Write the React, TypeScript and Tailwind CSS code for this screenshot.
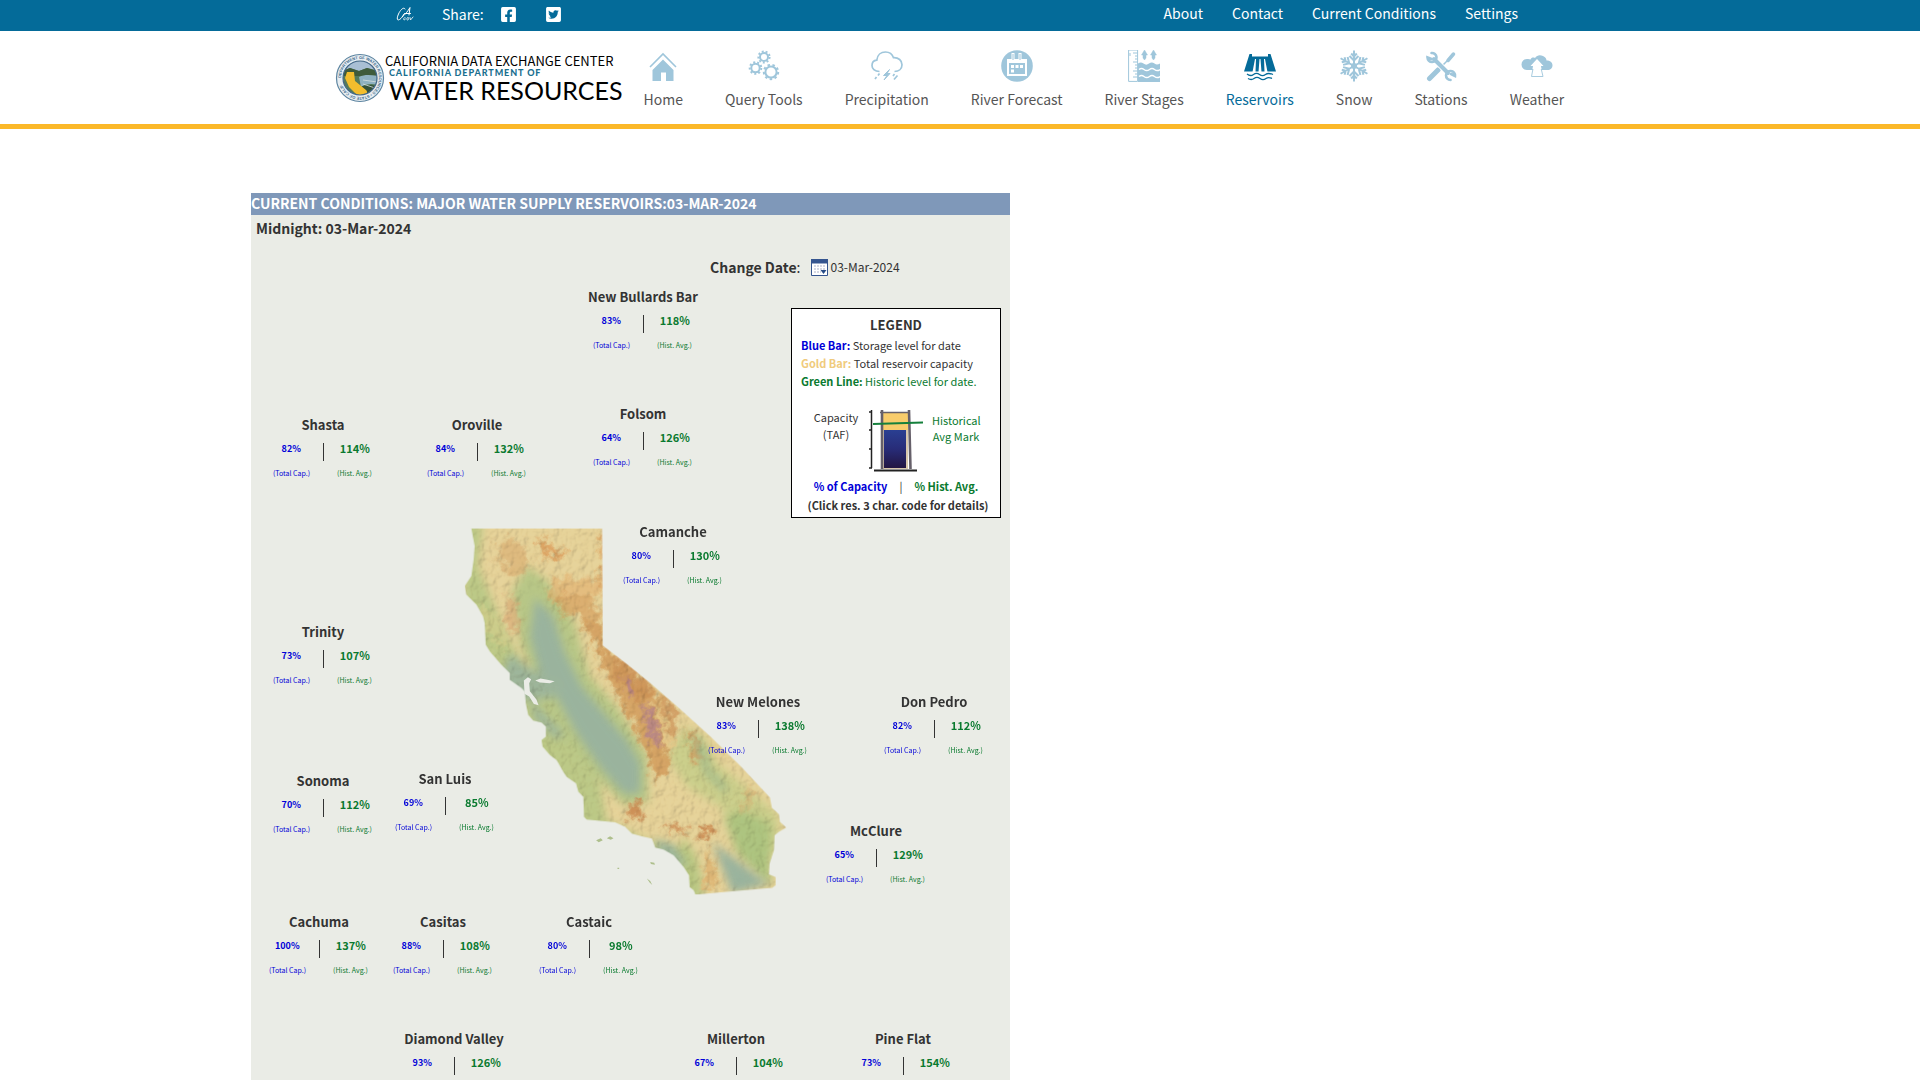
import type { ReactNode } from 'react'
import { FaFacebookSquare, FaTwitterSquare } from 'react-icons/fa'

const topLinks = ['About', 'Contact', 'Current Conditions', 'Settings']

const navItems: { name: string; icon: ReactNode; active?: boolean }[] = [
    { name: 'Home', icon: <HomeIcon /> },
    { name: 'Query Tools', icon: <GearsIcon /> },
    { name: 'Precipitation', icon: <StormIcon /> },
    { name: 'River Forecast', icon: <ForecastIcon /> },
    { name: 'River Stages', icon: <StagesIcon /> },
    { name: 'Reservoirs', icon: <DamIcon />, active: true },
    { name: 'Snow', icon: <SnowIcon /> },
    { name: 'Stations', icon: <ToolsIcon /> },
    { name: 'Weather', icon: <WeatherIcon /> },
]

// x is the middle of the label, y is its top edge, both on the map canvas
const reservoirs = [
    { name: 'New Bullards Bar', x: 392, y: 73, cap: 83, avg: 118 },
    { name: 'Shasta', x: 72, y: 201, cap: 82, avg: 114 },
    { name: 'Oroville', x: 226, y: 201, cap: 84, avg: 132 },
    { name: 'Folsom', x: 392, y: 190, cap: 64, avg: 126 },
    { name: 'Camanche', x: 422, y: 308, cap: 80, avg: 130 },
    { name: 'Trinity', x: 72, y: 408, cap: 73, avg: 107 },
    { name: 'New Melones', x: 507, y: 478, cap: 83, avg: 138 },
    { name: 'Don Pedro', x: 683, y: 478, cap: 82, avg: 112 },
    { name: 'Sonoma', x: 72, y: 557, cap: 70, avg: 112 },
    { name: 'San Luis', x: 194, y: 555, cap: 69, avg: 85 },
    { name: 'McClure', x: 625, y: 607, cap: 65, avg: 129 },
    { name: 'Cachuma', x: 68, y: 698, cap: 100, avg: 137 },
    { name: 'Casitas', x: 192, y: 698, cap: 88, avg: 108 },
    { name: 'Castaic', x: 338, y: 698, cap: 80, avg: 98 },
    { name: 'Diamond Valley', x: 203, y: 815, cap: 93, avg: 126 },
    { name: 'Millerton', x: 485, y: 815, cap: 67, avg: 104 },
    { name: 'Pine Flat', x: 652, y: 815, cap: 73, avg: 154 },
]

function HomeIcon() {
    return (
        <svg viewBox="0 0 32 32" className="h-8 w-8" fill="currentColor" aria-hidden="true">
            <path d="M3 17 16 4l13 13" fill="none" stroke="currentColor" strokeWidth="1.6" />
            <path d="M5.500 20 16 9.500 26.500 20V31H19v-8.500h-5V31H5.500z" />
        </svg>
    )
}

function Gear({ cx, cy, r }: { cx: number; cy: number; r: number }) {
    const step = (2 * Math.PI * (r + 1.6)) / 18
    return (
        <g fill="none" stroke="currentColor">
            <circle cx={cx} cy={cy} r={r} strokeWidth="2" />
            <circle cx={cx} cy={cy} r={r + 1.6} strokeWidth="2" strokeDasharray={`${step} ${step}`} />
        </g>
    )
}

function GearsIcon() {
    return (
        <svg viewBox="0 0 32 32" className="h-8 w-8" aria-hidden="true">
            <Gear cx={16} cy={7} r={4} />
            <Gear cx={7.5} cy={18} r={4.2} />
            <Gear cx={23} cy={22} r={5.6} />
        </svg>
    )
}

function StormIcon() {
    return (
        <svg viewBox="0 0 32 32" className="h-8 w-8" fill="none" stroke="currentColor" strokeWidth="1.7" aria-hidden="true">
            <path d="M8.500 21.500C3.500 21.500 1 18.500 1 15.500c0-3 2-5 4.800-5.300C6.300 5 10 2 14.500 2c4 0 6.800 2.200 8 5.700 5-.3 8.500 2.800 8.500 7s-3.300 6.800-7.500 6.800" />
            <path d="M18.500 19.500l-6 6h3.500l-3 4.500 6-6.500H16z" fill="currentColor" strokeWidth="1" />
            <path d="M8.500 23.500 7 25.500M5.500 27 4 29M23.500 24 22 26M26.500 25.500 23 29.500" />
        </svg>
    )
}

function ForecastIcon() {
    return (
        <svg viewBox="0 0 32 32" className="h-8 w-8" aria-hidden="true">
            <circle cx="16" cy="16" r="15.8" fill="currentColor" />
            <path d="M7 10h18v15H7z" fill="none" stroke="white" strokeWidth="2" />
            <path d="M7 9h18v4H7zM10.500 3h3v8h-3zM17.500 3h3v8h-3z" fill="white" />
            <path d="M12 4v6M19 4v6" stroke="currentColor" />
            <path d="M10 15h3v3h-3zM14.500 15h3v3h-3zM19 15h3v3h-3zM10 19.500h3v3h-3z" fill="white" />
        </svg>
    )
}

function StagesIcon() {
    return (
        <svg viewBox="0 0 32 32" className="h-8 w-8" fill="none" stroke="currentColor" aria-hidden="true">
            <path d="M.6 0h9v31.400h-9zM5 3h4.500M7 6h2.500M7 9h2.500M5 12h4.500M7 15h2.500M7 18h2.500M5 21h4.500M7 24h2.500M5 27h4.500" />
            <path d="M2 3v3" />
            <path d="M16.500 0l3 5h-1.500v3l-1.500 2-1.500-2V5h-1.500zM25.500 0l3 5h-1.500v3l-1.500 2-1.500-2V5h-1.500z" fill="currentColor" strokeWidth=".5" />
            <path d="M10 13.500c2-1.500 3.500-1.500 5.500 0s3.500 1.500 5.500 0 3.500-1.500 5.500 0 3.500 1 5.500 0V32H10z" fill="currentColor" stroke="none" />
            <path d="M11 19.500c2-1.500 3-1.500 5 0s3.500 1.500 5.500 0 3-1.500 5 0 3.500 1.500 5.500 0M11 26.500c2-1.500 3-1.500 5 0s3.500 1.500 5.500 0 3-1.500 5 0 3.500 1.500 5.500 0" stroke="white" strokeWidth="1.5" />
        </svg>
    )
}

function DamIcon() {
    return (
        <svg viewBox="0 0 32 32" className="h-8 w-8" fill="none" stroke="currentColor" strokeWidth="1.3" aria-hidden="true">
            <path d="M5.500 4H8v2.500h16V4h2.500L32 21.500H0z" fill="currentColor" stroke="none" />
            <path d="M11 9h1l-.5 13H8.500zM15.500 9h1l1 13h-3zM20 9h1l2.500 13h-3z" fill="white" stroke="none" />
            <path d="M3 24c2.500 2 4.500 2 6.500.500s4-1.500 6 0 4 1.500 6 0 4-1.500 7.500 0M4 28.500c2.500 1.500 4 1.500 6 0s4-1.500 6 0 4 1.500 6 0 4-1 6 0" />
        </svg>
    )
}

function SnowIcon() {
    return (
        <svg viewBox="0 0 32 32" className="h-8 w-8" fill="none" stroke="currentColor" strokeWidth="2" aria-hidden="true">
            {[0, 60, 120, 180, 240, 300].map((angle) => (
                <path
                    key={angle}
                    transform={`rotate(${angle} 16 16)`}
                    d="M16 16V.5M16 6.500l-2.800-3M16 6.500l2.800-3M16 10.500 11.500 6M16 10.500 20.500 6"
                />
            ))}
            <circle cx="16" cy="16" r="3" fill="currentColor" stroke="none" />
        </svg>
    )
}

function ToolsIcon() {
    return (
        <svg viewBox="0 0 32 32" className="h-8 w-8" fill="none" stroke="currentColor" strokeLinecap="round" aria-hidden="true">
            <path d="M4.500 28.500 13 20" strokeWidth="5" />
            <path d="M15 18l9-9" strokeWidth="1.5" />
            <path d="M23 10.500 28.500 4" strokeWidth="3.5" />
            <path d="M9 9l14 14" stroke="white" strokeWidth="6" />
            <path d="M9 9l14 14" strokeWidth="4" />
            <path d="M6.500 3a4.500 4.500 0 1 1-4 4.500l4 1.500" strokeWidth="2.6" />
            <path d="M25.500 30a4.500 4.500 0 1 1 4.500-4l-4-2" strokeWidth="2.6" />
        </svg>
    )
}

function WeatherIcon() {
    return (
        <svg viewBox="0 0 32 32" className="h-8 w-8" fill="currentColor" aria-hidden="true">
            <path d="M6 20a5.500 5.500 0 0 1 0-11c1.500-.3 2.500 0 3.500.5C10.500 7.500 12 7 14 8c2-3 5-3.500 8-2 2.500 1 3.500 3 3.500 4.500 3.500 0 6 2 6 4.700S29.500 20 26.500 20z" />
            <path d="M16 9.500 22 16h-2.500L22 26.500H10.500L12.500 16H10z" fill="white" stroke="currentColor" strokeWidth=".9" />
            <path d="M16 9 22.500 16H20l.5 3h-9l.5-3H9.500z" fill="white" />
        </svg>
    )
}

function Seal() {
    return (
        <svg viewBox="0 0 50 50" className="h-[50px] w-[50px] shrink-0" aria-hidden="true">
            <defs>
                <clipPath id="sealInner">
                    <circle cx="25" cy="25" r="17" />
                </clipPath>
                <path id="sealRing" d="M25 25m-19 0a19 19 0 1 1 38 0a19 19 0 1 1-38 0" />
            </defs>
            <circle cx="25" cy="25" r="23.5" fill="#e8eef2" stroke="#5c84a0" strokeWidth="1.2" />
            <text fontSize="4" fill="#3d6c8d" fontWeight="700" fontFamily="Liberation Sans, sans-serif">
                <textPath href="#sealRing">DEPARTMENT OF WATER RESOURCES • STATE OF CALIF</textPath>
            </text>
            <g clipPath="url(#sealInner)">
                <path d="M5 5h40v40H5z" fill="#547a5a" />
                <path d="M5 5h40v13L32 15l-8 3-9-3-10 4z" fill="#a9bfd4" />
                <path d="M5 19l10-4 9 3 8-3 13 4v4H5z" fill="#3f5b3b" />
                <path d="M24 24c6-3 12-2 20-1v9c-8-2-14-1-18 2z" fill="#8fb1c1" />
                <path d="M26 34c6-3 11-2 18 0v12H25z" fill="#35523b" />
                <path d="M28 27l14 2M28 31l12 4" stroke="#d5dfe0" strokeWidth=".8" />
                <path d="M12 19l7 0 1 9 11 9c2 2 1 4-1 5l-8 0-8-8-4-9z" fill="#f2bd2d" />
            </g>
            <circle cx="25" cy="25" r="17" fill="none" stroke="#44688a" strokeWidth="1.2" />
        </svg>
    )
}

function CaGovMark() {
    return (
        <svg viewBox="0 0 20 16" className="h-4 w-5" fill="none" stroke="white" strokeWidth="1" strokeLinecap="round" aria-hidden="true">
            <path d="M9 3C8 .5 4.500 3.500 2.500 8s-1.500 7 1 5.500 3-3 4-5M6 11c3-2 6-6 8-9.500L13 9M8.500 7.500h6" />
            <path d="M9 11.500c-1.500 0-2 2.500-.5 2.500l1-1.200M12 11.500c-1.200 0-1.800 2.300-.5 2.500s1.800-2.300.5-2.500M14 11.500l.5 2.500 2.500-3" strokeWidth=".8" />
        </svg>
    )
}

function CalendarIcon() {
    return (
        <svg viewBox="0 0 17 17" className="h-[17px] w-[17px]" aria-hidden="true">
            <path d="M.5.5h16v16H.5z" fill="white" stroke="#35558f" />
            <path d="M0 0h17v4.500H0z" fill="#35558f" />
            <path d="M3 7h11M3 10h11M3 13h7" stroke="#d5d8e4" strokeDasharray="2 1" strokeWidth="2" />
            <path d="M9.500 11h6l-3 4z" fill="#264b86" />
        </svg>
    )
}

function BarDiagram() {
    return (
        <svg viewBox="0 0 56 64" className="h-16 w-14" aria-hidden="true">
            <defs>
                <linearGradient id="storage" x1="0" y1="0" x2="0" y2="1">
                    <stop offset="0" stopColor="#2a3f92" />
                    <stop offset=".5" stopColor="#282c78" />
                    <stop offset="1" stopColor="#221542" />
                </linearGradient>
            </defs>
            <path d="M3.500 1v58M1 3h3M1 21h3M1 40h3M1 59h3" stroke="#222" strokeWidth="1.5" fill="none" />
            <path d="M15 4h25v17H15z" fill="#f8cc6b" />
            <path d="M15 21h25v39H15z" fill="#d8c7ac" />
            <path d="M16 21h22v38H16z" fill="url(#storage)" />
            <path d="M14 1v59M41 1l1.500 59" stroke="#66606a" strokeWidth="2.6" />
            <path d="M12 3.500h30" stroke="#66606a" strokeWidth="1.5" />
            <path d="M6 61.500h43" stroke="#222" strokeWidth="1.8" />
            <path d="M5 15l50-1.500" stroke="#15803c" strokeWidth="1.8" />
        </svg>
    )
}

const outline =
    'M65 57H456L458 408 530 463 600 520 690 598 780 680 870 768 958 862 964 893 985 912 988 935 1007 952 985 965 972 975 970 1020 957 1060 955 1092 975 1100 975 1125 965 1132 735 1152 730 1140 718 1130 716 1095 700 1070 670 1035 640 1018 615 1012 605 985 575 978 545 970 525 950 495 936 450 932 410 928 402 920 400 860 385 845 378 820 350 800 340 785 320 750 300 735 278 710 275 690 288 680 288 650 275 638 250 632 235 615 228 580 225 545 215 535 180 510 180 490 155 465 120 425 108 405 105 340 100 320 80 285 50 255 45 230 65 200 72 150 75 110Z'

function CaliforniaMap() {
    return (
        <svg viewBox="40 50 972 1108" className="h-auto w-[325px]" role="img" aria-label="California relief map">
            <defs>
                <clipPath id="state">
                    <path d={outline} />
                </clipPath>
                <filter id="soft" x="-20%" y="-20%" width="140%" height="140%">
                    <feGaussianBlur stdDeviation="12" />
                </filter>
                <filter id="rough" x="-20%" y="-20%" width="140%" height="140%">
                    <feGaussianBlur stdDeviation="6" result="b" />
                    <feTurbulence type="fractalNoise" baseFrequency=".035" numOctaves="3" seed="4" />
                    <feDisplacementMap in="b" scale="65" xChannelSelector="R" yChannelSelector="G" />
                </filter>
                <filter id="relief" x="0" y="0" width="100%" height="100%">
                    <feTurbulence type="fractalNoise" baseFrequency=".04" numOctaves="4" seed="9" />
                    <feDiffuseLighting lightingColor="#fffaf0" surfaceScale="9" diffuseConstant="1.18">
                        <feDistantLight azimuth="215" elevation="60" />
                    </feDiffuseLighting>
                </filter>
                <mask id="hills">
                    <path d="M40 50h980v1110H40z" fill="white" />
                    <path d="M240 230L330 400 400 560 500 680 560 760 560 860 480 790 370 640 300 510 250 400Z" fill="black" stroke="black" strokeWidth="40" filter="url(#soft)" />
                    <path d="M800 1010l130 110h-90z" fill="black" stroke="black" strokeWidth="16" filter="url(#soft)" />
                </mask>
            </defs>
            <g clipPath="url(#state)">
                <path d="M40 50h980v1110H40z" fill="#e6d39b" />
                <g filter="url(#soft)">
                    <path d="M40 40h60l-15 130 75 180 60 120 70 70 60 130 100 150 20 110 120 60 110 30 60 120v80H660L200 760 40 400z" fill="#bcc988" />
                    <path d="M230 170L185 250 210 400 250 500 320 640 440 800 520 885 595 875 590 730 500 590 420 500 370 330 290 210z" fill="#b8c788" />
                    <path d="M700 650l60 30 40 80 50 40 130 110 10 120-110-20-70-120-100-60-60-90z" fill="#cbcf8d" />
                    <path d="M820 920l60-20 80 40v190l-100-100z" fill="#adc481" />
                    <path d="M700 980l40 60 20 90h-60l-30-80z" fill="#b9c884" />
                </g>
                <g filter="url(#rough)">
                    <path d="M150 90l70 10 20 60-30 40-30 0-40-60z" fill="#d9ab70" opacity=".6" />
                    <path d="M165 260l40 10 0 110-30-20z" fill="#d9a06d" opacity=".5" />
                    <path d="M90 290l50 20 40 100-30 10-50-70z" fill="#d6cf8e" opacity=".6" />
                    <path d="M265 80l30 10-6 22 60 8-8 22-60-8-16 25z" fill="#dc9c5b" opacity=".85" />
                    <path d="M450 70h20v190l-20-30 2-80z" fill="#dca867" />
                    <path d="M300 200l150 20 10 40-70 0-90 20z" fill="#e2ab69" opacity=".55" />
                    <path d="M320 260l90 0 60 60-40 10-100-20z" fill="#d49757" opacity=".6" />
                    <path d="M395 330L440 430 480 520 540 620 590 740 610 810 655 780 665 700 635 570 560 500 470 420 450 330z" fill="#d19859" opacity=".8" />
                    <path d="M710 660l25 10 20 80-22 10z" fill="#d49b5f" opacity=".8" />
                    <path d="M490 430l60 40 60 60-40 50-60-50z" fill="#cb9055" opacity=".7" />
                    <path d="M630 550l40 30 10 90-20 0z" fill="#cd955a" opacity=".8" />
                    <path d="M520 500l30 15 5 45-20 0zM575 590l25 0 35 110-15 20-30-60z" fill="#b5848c" opacity=".85" />
                    <path d="M535 875l40 10 5 40-45-5zM650 945l50 0 10 22-60-5zM745 950l45 0 5 30-45-10z" fill="#c9854c" opacity=".85" />
                    <path d="M775 1000l20 40 10 90h-50z" fill="#deb878" />
                    <path d="M890 840l25 10-40 60z" fill="#d8a46b" opacity=".5" />
                    <path d="M610 570l20 20 35 120-15 10z" fill="#e7cd8f" />
                </g>
                <g filter="url(#soft)">
                    <path d="M255 265L310 320 345 430 395 530 470 620 530 690 570 760 570 850 520 850 450 770 380 670 320 560 270 490 240 380Z" fill="#9ab39d" />
                    <path d="M180 430l50 40 50 30 60 20-20 40-70 10-40 0-60-60z" fill="#9db59b" />
                    <path d="M720 660l40 50 20 70 50 50-5 20-60-60z" fill="#9db78b" />
                    <path d="M240 560l40 50 60 60-15 20-70-60z" fill="#9db59b" />
                    <path d="M610 985l60 20 40 60-30 0-50-40z" fill="#9ab39d" />
                    <path d="M785 995l170 125-110 30z" fill="#9ab39d" />
                </g>
                <path d="M40 50h980v1110H40z" filter="url(#relief)" mask="url(#hills)" opacity=".4" className="mix-blend-multiply" />
            </g>
            <path d="M222 512l12-10 10 6-6 12 2 24 20 26 6 16-14-4-14-22-14-8zM256 512l16-6 20 4 22 4-14 6-30-2z" fill="#eaece6" />
            <path d="M438 990l14-6 6 6-12 6zM470 984l10-6 10 6-8 4zM600 1055l12 2 2 6-12-2zM502 1072h5v4h-5zM590 1104l10 8 6 12-8-8z" fill="#aebf8c" />
        </svg>
    )
}

function Legend() {
    return (
        <section className="h-[210px] w-[210px] border border-black bg-white pt-[6px] text-[11px] leading-[18px] text-[#333]">
            <h2 className="pb-px text-center text-[13px] leading-5 font-bold">LEGEND</h2>
            <div className="px-[9px] whitespace-nowrap">
                <p><b className="text-[#0000d8]">Blue Bar:</b> Storage level for date</p>
                <p><b className="text-[#f0cb7d]">Gold Bar:</b> Total reservoir capacity</p>
                <p className="text-[#0a7a2f]"><b>Green Line:</b> Historic level for date.</p>
            </div>
            <div className="mt-[19px] flex justify-center gap-2 leading-4">
                <p className="w-12 text-center leading-[17px]">Capacity<br />(TAF)</p>
                <BarDiagram />
                <p className="w-12 pt-[3px] text-center text-[#0a7a2f]">Historical<br />Avg Mark</p>
            </div>
            <div className="mt-1 flex justify-center gap-3 font-bold">
                <span className="text-[#0000d8]">% of Capacity</span>
                <span className="font-normal">|</span>
                <span className="text-[#0a7a2f]">% Hist. Avg.</span>
            </div>
            <p className="pt-px pl-1 text-center font-bold whitespace-nowrap">(Click res. 3 char. code for details)</p>
        </section>
    )
}

export default function App() {
    return (
        <div className="min-h-screen bg-white font-['Noto_Sans_CJK_JP','Noto_Sans',sans-serif] text-[#333]">
            <div className="bg-[#046b99] text-white">
                <div className="mx-auto flex h-[31px] max-w-[1250px] items-center justify-between pr-[67px] pb-[3px] pl-[61px] text-[14px] leading-5">
                    <div className="flex items-center">
                        <a href="#" aria-label="CA.gov"><CaGovMark /></a>
                        <span className="ml-[26px]">Share:</span>
                        <a href="#" aria-label="Facebook" className="ml-4"><FaFacebookSquare className="h-[17px] w-[17px]" /></a>
                        <a href="#" aria-label="Twitter" className="ml-7"><FaTwitterSquare className="h-[17px] w-[17px]" /></a>
                    </div>
                    <nav className="flex gap-[29px] pb-[2px]">
                        {topLinks.map((link) => (
                            <a key={link} href="#">{link}</a>
                        ))}
                    </nav>
                </div>
            </div>
            <header className="border-b-5 border-[#fbb829]">
                <div className="mx-auto flex h-[93px] max-w-[1250px] items-center justify-between">
                    <a href="#" className="flex items-center whitespace-nowrap text-black">
                        <Seal />
                        <div className="flex flex-col font-[Lato,sans-serif]">
                            <span className="font-['Noto_Sans_CJK_JP',sans-serif] text-[13px] leading-[14px]">CALIFORNIA DATA EXCHANGE CENTER</span>
                            <span className="pl-1 text-[9px] leading-[10px] font-black tracking-widest text-[#1a6f8f]">CALIFORNIA DEPARTMENT OF</span>
                            <span className="pl-1 text-[25px] leading-6">WATER RESOURCES</span>
                        </div>
                    </a>
                    <nav className="flex pt-[3px] text-[14px] leading-5">
                        {navItems.map((item) => (
                            <a key={item.name} href="#" className="flex flex-col items-center gap-[7px] px-[21px] whitespace-nowrap">
                                <span className={item.active ? 'text-[#046b99]' : 'text-[#9fc6db]'}>{item.icon}</span>
                                <span className={item.active ? 'text-[#046b99]' : 'text-[#555]'}>{item.name}</span>
                            </a>
                        ))}
                    </nav>
                </div>
            </header>
            <main className="mx-auto max-w-[1418px] pt-16">
                <div className="max-w-[759px] bg-[#eaece6]">
                    <h1 className="bg-[#7f98b9] pb-[2px] text-[14px] leading-5 font-bold text-white">
                        CURRENT CONDITIONS: MAJOR WATER SUPPLY RESERVOIRS:03-MAR-2024
                    </h1>
                    <div className="relative min-h-[900px]">
                        <p className="px-[5px] pb-[2px] text-[14px] leading-[26px] font-bold">Midnight: 03-Mar-2024</p>
                        <div className="mt-[13px] flex items-center pl-[459px] leading-[22px]">
                            <span className="text-[14px]"><b>Change Date</b>:</span>
                            <button type="button" aria-label="Pick a date" className="ml-[11px]"><CalendarIcon /></button>
                            <span className="ml-[2px] text-[12px]">03-Mar-2024</span>
                        </div>
                        <div className="absolute top-[311px] left-[212px]">
                            <CaliforniaMap />
                        </div>
                        <div className="absolute top-[93px] left-[540px]">
                            <Legend />
                        </div>
                        {reservoirs.map((res) => (
                            <div
                                key={res.name}
                                className="absolute w-[126px] -translate-x-1/2 text-center whitespace-nowrap"
                                style={{ left: res.x, top: res.y }}
                            >
                                <div className="text-[13px] leading-[18px] font-bold">{res.name}</div>
                                <div className="mt-[9px] flex h-[18px] font-bold">
                                    <span className="flex-1 text-[9px] leading-3 text-[#0000d8]">{res.cap}%</span>
                                    <span className="w-px bg-[#333]" />
                                    <span className="flex-1 text-[11px] leading-[10px] text-[#0a7a2f]">{res.avg}%</span>
                                </div>
                                <div className="mt-[6px] flex text-[7px] leading-3">
                                    <span className="flex-1 text-[#0000d8]">(Total Cap.)</span>
                                    <span className="flex-1 text-[#0a7a2f]">(Hist. Avg.)</span>
                                </div>
                            </div>
                        ))}
                    </div>
                </div>
            </main>
        </div>
    )
}
